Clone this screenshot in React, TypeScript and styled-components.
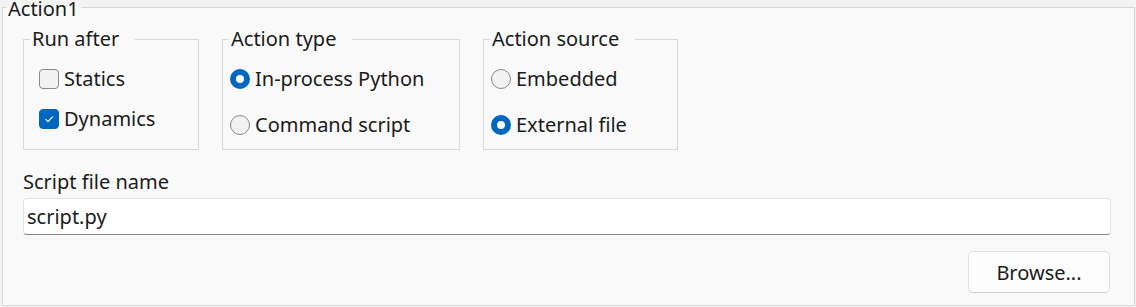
import styled, { createGlobalStyle } from "styled-components";

const GlobalStyle = createGlobalStyle`
  html, body {
    margin: 0;
    padding: 0;
    background: #f3f3f3;
  }
  body {
    font-family: "Noto Sans", "Open Sans", sans-serif;
    color: #1b1b1b;
    font-size: 20px;
  }
`;

const Frame = styled.fieldset`
  margin: 0 1px 1px 2px;
  padding: 0;
  border: 1px solid #d9d9d9;
  background: #f9f9f9;
  min-width: 0;
`;

// padding-top pushes the caption below the frame line a little, like the native caption
const FrameTitle = styled.legend`
  margin-left: 4px;
  padding: 4px 2px 0 1px;
  font-size: 20px;
  line-height: 10px;
`;

const Body = styled.div`
  display: flex;
  flex-direction: column;
  padding: 12px 23px 12px 20px;
`;

const GroupsRow = styled.div`
  display: flex;
  align-items: stretch;
  gap: 23px;
`;

const Group = styled.fieldset<{ $width: number }>`
  box-sizing: border-box;
  width: ${(p) => p.$width}px;
  margin: 0;
  padding: 17px 0 14px 0;
  border: 1px solid #dadada;
  min-width: 0;
`;

const GroupTitle = styled.legend`
  margin-left: 6px;
  padding: 0 16px 0 2px;
  font-size: 20px;
  line-height: 26px;
`;

const OptionList = styled.div<{ $inset: number; $gap: number }>`
  display: flex;
  flex-direction: column;
  gap: ${(p) => p.$gap}px;
  padding-left: ${(p) => p.$inset}px;
`;

const Option = styled.label`
  display: flex;
  align-items: center;
  gap: 5px;
  height: 20px;
  font-size: 20px;
  line-height: 20px;
  white-space: nowrap;
`;

const CheckBox = styled.span<{ $on: boolean }>`
  box-sizing: border-box;
  width: 20px;
  height: 20px;
  flex: none;
  border-radius: 4px;
  border: 1px solid ${(p) => (p.$on ? "#0067c0" : "#8a8a8a")};
  background: ${(p) => (p.$on ? "#0067c0" : "#f2f2f2")};
  display: flex;
  align-items: center;
  justify-content: center;
`;

const Radio = styled.span<{ $on: boolean }>`
  box-sizing: border-box;
  width: 20px;
  height: 20px;
  flex: none;
  border-radius: 50%;
  border: ${(p) => (p.$on ? "6px solid #0067c0" : "1px solid #8a8a8a")};
  background: ${(p) => (p.$on ? "#ffffff" : "#f2f2f2")};
`;

const FieldLabel = styled.div`
  margin-top: 19px;
  font-size: 20px;
  line-height: 26px;
`;

const TextInput = styled.input`
  box-sizing: border-box;
  margin-top: 3px;
  height: 37px;
  width: 100%;
  padding: 0 3px;
  border: 1px solid #e5e5e5;
  border-bottom-color: #868686;
  border-radius: 4px;
  background: #ffffff;
  font-family: inherit;
  font-size: 20px;
  color: #1b1b1b;
  outline: none;
`;

const ButtonRow = styled.div`
  display: flex;
  justify-content: flex-end;
  margin-top: 16px;
  padding-right: 1px;
`;

const Button = styled.button`
  box-sizing: border-box;
  width: 142px;
  height: 42px;
  border: 1px solid #e0e0e0;
  border-bottom-color: #cfcfcf;
  border-radius: 5px;
  background: #fdfdfd;
  font-family: inherit;
  font-size: 20px;
  color: #1b1b1b;
`;

function Check({ label, on }: { label: string; on: boolean }) {
  return (
    <Option>
      <CheckBox $on={on}>
        {on && (
          <svg width="12" height="12" viewBox="0 0 12 12">
            <path d="M2.5 6.2 L5 8.6 L9.6 3.6" fill="none" stroke="#fff" strokeWidth="1.1" />
          </svg>
        )}
      </CheckBox>
      {label}
    </Option>
  );
}

function Choice({ label, on }: { label: string; on: boolean }) {
  return (
    <Option>
      <Radio $on={on} />
      {label}
    </Option>
  );
}

export default function App() {
  return (
    <>
      <GlobalStyle />
      <Frame>
        <FrameTitle>Action1</FrameTitle>
        <Body>
          <GroupsRow>
            <Group $width={176}>
              <GroupTitle>Run after</GroupTitle>
              <OptionList $inset={15} $gap={20}>
                <Check label="Statics" on={false} />
                <Check label="Dynamics" on={true} />
              </OptionList>
            </Group>
            <Group $width={238}>
              <GroupTitle>Action type</GroupTitle>
              <OptionList $inset={7} $gap={26}>
                <Choice label="In-process Python" on={true} />
                <Choice label="Command script" on={false} />
              </OptionList>
            </Group>
            <Group $width={195}>
              <GroupTitle>Action source</GroupTitle>
              <OptionList $inset={7} $gap={26}>
                <Choice label="Embedded" on={false} />
                <Choice label="External file" on={true} />
              </OptionList>
            </Group>
          </GroupsRow>
          <FieldLabel>Script file name</FieldLabel>
          <TextInput defaultValue="script.py" />
          <ButtonRow>
            <Button>Browse...</Button>
          </ButtonRow>
        </Body>
      </Frame>
    </>
  );
}
